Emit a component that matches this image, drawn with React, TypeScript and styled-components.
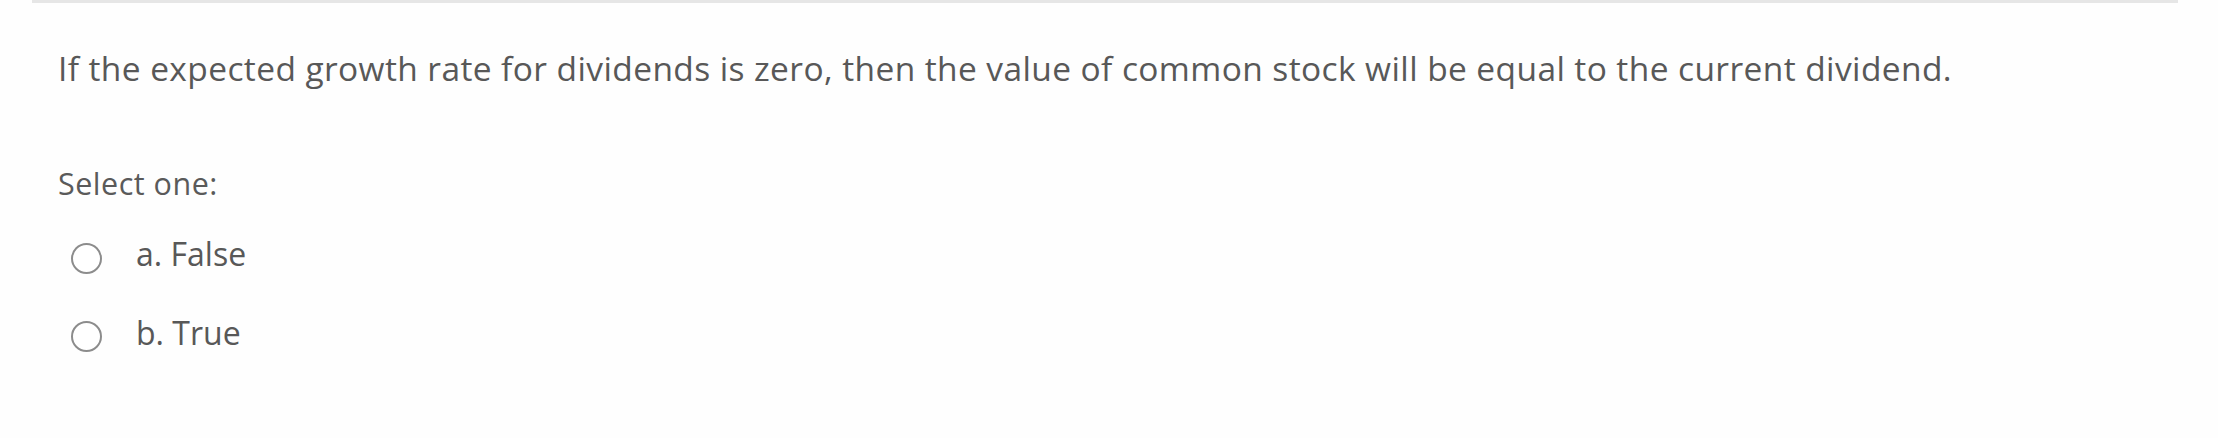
import React from "react";
import styled, { createGlobalStyle } from "styled-components";

const Global = createGlobalStyle`
  html, body {
    margin: 0;
    padding: 0;
    background: #fefefe;
  }
  body {
    font-family: "Open Sans", "Noto Sans", sans-serif;
    color: #565656;
  }
`;

const Page = styled.div`
  width: 2218px;
  height: 438px;
  box-sizing: border-box;
  padding: 0 40px 0 32px;
`;

const Card = styled.section`
  border-top: 3px solid #e6e6e6;
  box-shadow: 0 -1px 0 #f2f2f2;
  padding: 41px 0 0 26px;
  height: 100%;
  box-sizing: border-box;
`;

const Question = styled.p`
  margin: 0;
  font-size: 33.5px;
  line-height: 49px;
  letter-spacing: 0.4px;
  color: #585858;
`;

const Prompt = styled.div`
  margin-top: 69px;
  font-size: 30.5px;
  line-height: 42px;
  letter-spacing: 0.5px;
  color: #5a5a5a;
`;

const Options = styled.div`
  display: flex;
  flex-direction: column;
  margin-top: 15px;
`;

const Option = styled.label`
  display: flex;
  align-items: center;
  height: 78.5px;
  padding-left: 13px;
`;

const Radio = styled.span`
  width: 27px;
  height: 27px;
  border: 2px solid #8c8c8c;
  border-radius: 50%;
  background: #fff;
  flex: none;
`;

const OptionText = styled.span`
  margin-left: 34px;
  font-size: 32px;
  line-height: 42px;
  padding-bottom: 8px;
  color: #585858;
`;

const options = ["a. False", "b. True"];

export default function App() {
  return (
    <>
      <Global />
      <Page>
        <Card>
          <Question>
            If the expected growth rate for dividends is zero, then the value of common stock will be equal to the current dividend.
          </Question>
          <Prompt>Select one:</Prompt>
          <Options>
            {options.map((o) => (
              <Option key={o}>
                <Radio />
                <OptionText>{o}</OptionText>
              </Option>
            ))}
          </Options>
        </Card>
      </Page>
    </>
  );
}
